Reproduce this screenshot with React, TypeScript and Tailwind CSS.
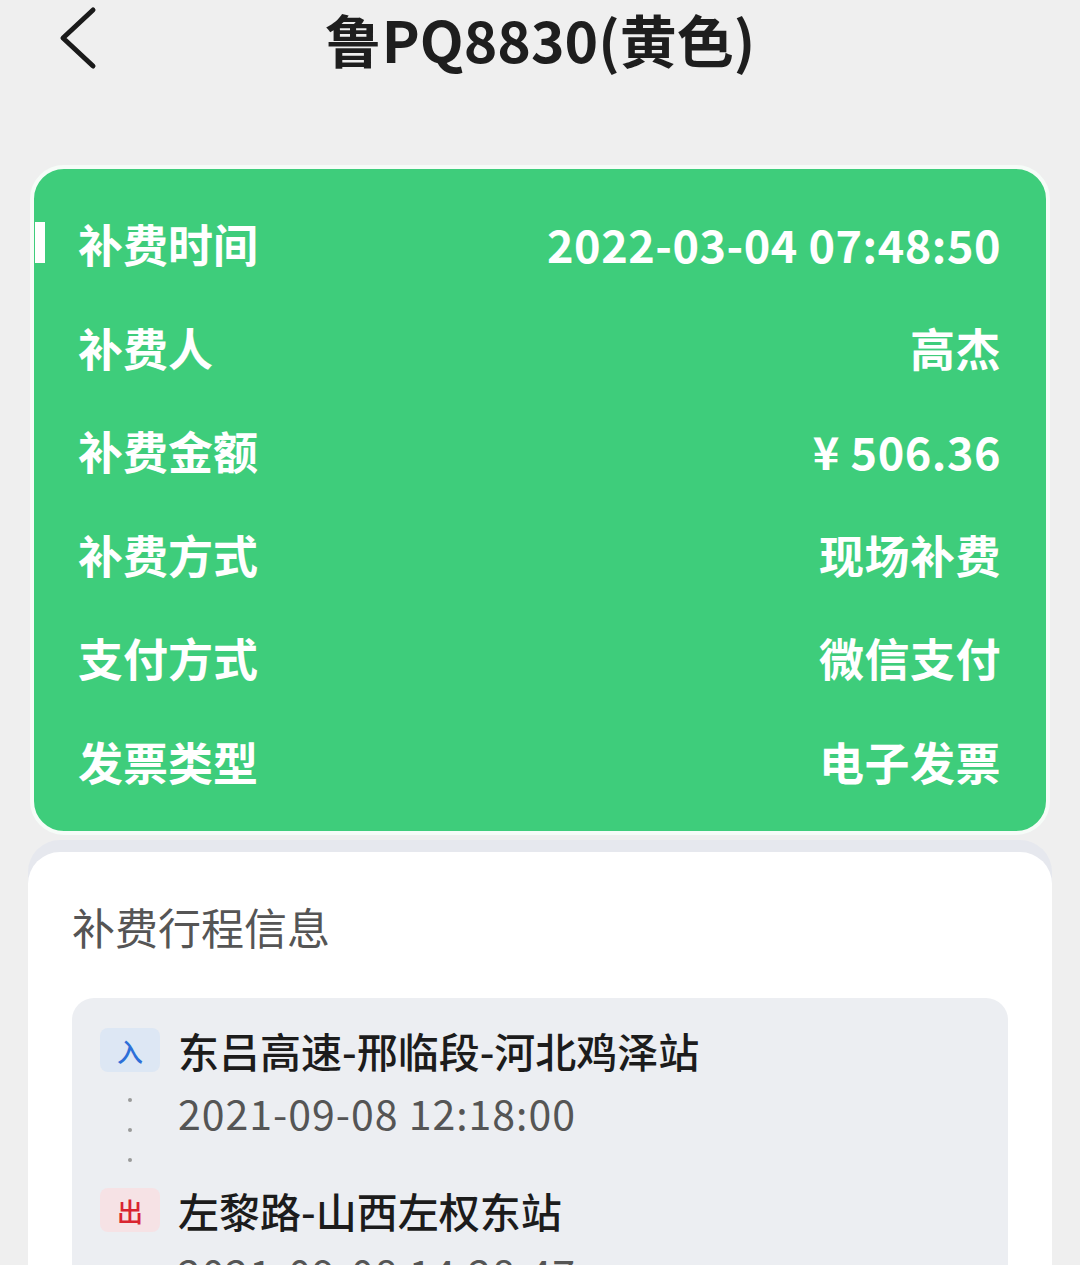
const cjk = { fontFamily: '"Noto Sans CJK SC", "Noto Sans", sans-serif' };

const rows = [
  { label: "补费时间", value: "2022-03-04 07:48:50" },
  { label: "补费人", value: "高杰" },
  { label: "补费金额", value: "¥ 506.36" },
  { label: "补费方式", value: "现场补费" },
  { label: "支付方式", value: "微信支付" },
  { label: "发票类型", value: "电子发票" },
];

function Stop({ tag, name, time, tone }: { tag: string; name: string; time: string; tone: "in" | "out" }) {
  return (
    <div className="flex items-start">
      <div
        className={
          "w-[60px] h-[44px] rounded-[8px] flex items-center justify-center text-[26px] font-medium " +
          (tone === "in" ? "bg-[#dde7f4] text-[#2d6fd8]" : "bg-[#f6e2e5] text-[#d92430]")
        }
      >
        {tag}
      </div>
      <div className="ml-[18px] flex flex-col">
        <div className="text-[41px] leading-[44px] font-medium text-[#1c1c1c]">{name}</div>
        <div className="mt-[18px] text-[41px] leading-[44px] tracking-[1px] text-[#555]">{time}</div>
      </div>
    </div>
  );
}

export default function App() {
  return (
    <div className="w-[1080px] h-[1265px] overflow-hidden bg-[#efefef]" style={cjk}>
      {/* header */}
      <div className="relative h-[78px] flex items-center justify-center">
        <svg className="absolute left-[56px] top-[6px] w-[44px] h-[64px]" viewBox="0 0 44 64" fill="none">
          <polyline points="37,4 7,32 37,60" stroke="#1a1a1a" strokeWidth="5" strokeLinecap="round" strokeLinejoin="round" />
        </svg>
        <div className="text-[57px] font-bold text-[#1e1e1e] leading-[70px] -mt-[2px]">鲁PQ8830(黄色)</div>
      </div>

      {/* summary card */}
      <div className="relative mt-[87px] mx-[30px] border-[4px] border-[#f6fcf8] rounded-[34px] bg-[#3ecd7b] pt-[23px] pb-[18px] pl-[44px] pr-[45px]">
        <div className="absolute left-[1px] top-[53px] w-[10px] h-[41px] bg-white" />
        {rows.map((r) => (
          <div key={r.label} className="h-[103.5px] flex items-center justify-between text-white font-bold">
            <span className="text-[45px]">{r.label}</span>
            <span className="text-[45px] tracking-[0.5px]">{r.value}</span>
          </div>
        ))}
      </div>

      {/* trip card */}
      <div className="mt-[17px] mx-[28px] bg-white rounded-[32px] shadow-[0_-12px_0_0_#e6e8ee] px-[44px] pt-[48px] pb-[40px]">
        <div className="text-[43px] leading-[52px] text-[#555]">补费行程信息</div>
        <div className="mt-[46px] bg-[#eceef2] rounded-[22px] pl-[28px] pr-[40px] pt-[30px] pb-[30px]">
          <Stop tag="入" name="东吕高速-邢临段-河北鸡泽站" time="2021-09-08 12:18:00" tone="in" />
          <div className="flex flex-col items-center w-[60px] gap-[26px] -mt-[36px] mb-[26px]">
            <div className="w-[4px] h-[4px] rounded-full bg-[#9a9a9a]" />
            <div className="w-[4px] h-[4px] rounded-full bg-[#9a9a9a]" />
            <div className="w-[4px] h-[4px] rounded-full bg-[#9a9a9a]" />
          </div>
          <Stop tag="出" name="左黎路-山西左权东站" time="2021-09-08 14:28:47" tone="out" />
        </div>
      </div>
    </div>
  );
}
